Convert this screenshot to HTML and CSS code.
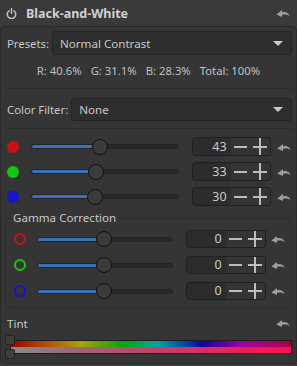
FILE: index.html
```html
<!DOCTYPE html>
<html>
<head>
<meta charset="utf-8">
<link rel="stylesheet" href="styles.css">
</head>
<body>
<svg class="defs" width="0" height="0">
  <symbol id="undo" viewBox="0 0 14 8">
    <path d="M0.3 5.6 L6 1 L6 3.2 C9.5 2.4 12.6 3.6 13.8 7.6 C12 5.6 9.2 5.2 6 6 L6 8 Z"/>
  </symbol>
</svg>
<div class="expander">
  <div class="header">
    <svg class="power" viewBox="0 0 12 12"><path d="M3.4 3 A4.6 4.6 0 1 0 8.6 3" /><path d="M6 0.8 V5.8"/></svg>
    <span class="title">Black-and-White</span>
    <svg class="reset hreset"><use href="#undo"/></svg>
  </div>
  <div class="panel">
    <div class="combo-row presets">
      <span class="label">Presets:</span>
      <div class="combo"><span>Normal Contrast</span><span class="arrow"></span></div>
    </div>
    <div class="stats"><span>R: 40.6%</span><span>G: 31.1%</span><span>B: 28.3%</span><span>Total: 100%</span></div>
    <div class="sep first"></div>
    <div class="combo-row filter">
      <span class="label">Color Filter:</span>
      <div class="combo small"><span>None</span><span class="arrow"></span></div>
    </div>
    <div class="sep second"></div>

    <div class="mixer">
      <div class="srow">
        <span class="dot red"></span>
        <div class="slider main"><div class="track"><div class="fill" style="width:69px"></div></div><div class="knob" style="left:61px"></div></div>
        <div class="spin"><span class="val">43</span><span class="btn minus"><i></i></span><span class="btn plus"><i></i><b></b></span></div>
        <svg class="reset"><use href="#undo"/></svg>
      </div>
      <div class="srow">
        <span class="dot green"></span>
        <div class="slider main"><div class="track"><div class="fill" style="width:65px"></div></div><div class="knob" style="left:57px"></div></div>
        <div class="spin"><span class="val">33</span><span class="btn minus"><i></i></span><span class="btn plus"><i></i><b></b></span></div>
        <svg class="reset"><use href="#undo"/></svg>
      </div>
      <div class="srow">
        <span class="dot blue"></span>
        <div class="slider main"><div class="track"><div class="fill" style="width:64px"></div></div><div class="knob" style="left:56px"></div></div>
        <div class="spin"><span class="val">30</span><span class="btn minus"><i></i></span><span class="btn plus"><i></i><b></b></span></div>
        <svg class="reset"><use href="#undo"/></svg>
      </div>
    </div>

    <fieldset class="gamma">
      <legend>Gamma Correction</legend>
      <div class="grow">
        <span class="ring red"></span>
        <div class="slider gam"><div class="track"><div class="fill" style="width:67px"></div></div><div class="knob" style="left:59px"></div></div>
        <div class="spin g"><span class="val">0</span><span class="btn minus"><i></i></span><span class="btn plus"><i></i><b></b></span></div>
        <svg class="reset"><use href="#undo"/></svg>
      </div>
      <div class="grow">
        <span class="ring green"></span>
        <div class="slider gam"><div class="track"><div class="fill" style="width:67px"></div></div><div class="knob" style="left:59px"></div></div>
        <div class="spin g"><span class="val">0</span><span class="btn minus"><i></i></span><span class="btn plus"><i></i><b></b></span></div>
        <svg class="reset"><use href="#undo"/></svg>
      </div>
      <div class="grow">
        <span class="ring blue"></span>
        <div class="slider gam"><div class="track"><div class="fill" style="width:67px"></div></div><div class="knob" style="left:59px"></div></div>
        <div class="spin g"><span class="val">0</span><span class="btn minus"><i></i></span><span class="btn plus"><i></i><b></b></span></div>
        <svg class="reset"><use href="#undo"/></svg>
      </div>
    </fieldset>

    <div class="tint-head"><span>Tint</span><svg class="reset"><use href="#undo"/></svg></div>
    <div class="tint">
      <div class="bars"><div class="bar-top"></div><div class="bar-bot"></div></div>
      <span class="handle h1"></span>
      <span class="handle h2"></span>
    </div>
  </div>
</div>
</body>
</html>
```
FILE: styles.css
```css
* { box-sizing: border-box; }
html, body { margin: 0; padding: 0; }
body {
  width: 297px;
  height: 366px;
  background: #3a3a3a;
  font-family: "Noto Sans", "Open Sans", sans-serif;
  font-size: 11.3px;
  color: #c6c6c6;
  overflow: hidden;
}
.defs { position: absolute; }
.header {
  height: 26px;
  display: flex;
  align-items: center;
  padding: 0 5px 0 6px;
}
.power {
  width: 11px; height: 11px;
  fill: none;
  stroke: #c4c4c4;
  stroke-width: 1.6;
  stroke-linecap: round;
  margin-top: 1px;
}
.title {
  margin-left: 9px;
  font-weight: bold;
  font-size: 12.5px;
  color: #cdd2d6;
  flex: 1;
}
.reset {
  width: 14px; height: 8px;
  fill: #9c9c9c;
  flex: none;
}
.hreset { margin-right: 2px; }
.panel {
  height: 338px;
  background: #353535;
  border: 1px solid #2a2a2a;
  border-radius: 4px;
  padding: 0 4px 0 4px;
  display: flex;
  flex-direction: column;
}
.combo-row {
  display: flex;
  align-items: center;
  gap: 3px;
}
.combo-row .label { margin-left: 2px; }
.presets { margin-top: 4px; }
.filter { margin-top: 9px; }
.combo {
  flex: 1;
  height: 24px;
  background: #2e2e2e;
  border: 1px solid #242424;
  border-radius: 3px;
  display: flex;
  align-items: center;
  justify-content: space-between;
  padding: 0 8px 0 7px;
  font-size: 11.6px;
}
.combo.small { height: 23px; }
.arrow {
  width: 0; height: 0;
  border-left: 5px solid transparent;
  border-right: 5px solid transparent;
  border-top: 5px solid #c8c8c8;
}
.stats {
  height: 30px;
  display: flex;
  justify-content: center;
  align-items: center;
  gap: 9px;
  color: #bcc0c2;
}
.sep { height: 1px; background: #2c2c2c; }
.first { margin-top: 3px; }
.second { margin-top: 7px; }
.mixer { margin-top: 5px; }
.srow {
  display: flex;
  align-items: center;
  height: 25px;
}
.grow {
  display: flex;
  align-items: center;
  height: 26px;
}
.dot {
  width: 12px; height: 12px;
  border-radius: 50%;
  margin-left: 2px;
  flex: none;
}
.dot.red { background: #cc1111; }
.dot.green { background: #11c711; }
.dot.blue { background: #1414c8; }
.ring {
  width: 12px; height: 12px;
  border-radius: 50%;
  border: 2px solid;
  margin-left: 8px;
  flex: none;
}
.ring.red { border-color: #cc1111; }
.ring.green { border-color: #11c711; }
.ring.blue { border-color: #1414c8; }
.slider {
  position: relative;
  height: 16px;
  display: flex;
  align-items: center;
  flex: none;
}
.slider.main { width: 148px; margin-left: 12px; }
.slider.gam { width: 136px; margin-left: 11px; }
.track {
  width: 100%;
  height: 5px;
  background: #292929;
  border-radius: 3px;
  overflow: hidden;
  border: 1px solid #242424;
}
.fill { height: 100%; background: #3a70b6; }
.knob {
  position: absolute;
  top: 0;
  width: 16px; height: 16px;
  border-radius: 50%;
  background: #3b3b3b;
  border: 1px solid #111;
}
.spin {
  display: flex;
  height: 19px;
  width: 79px;
  margin-left: 13px;
  border: 1px solid #202020;
  border-radius: 3px;
  background: #343434;
  overflow: hidden;
  flex: none;
}
.spin.g { width: 80px; height: 18px; }
.val {
  width: 38px;
  background: #2c2c2c;
  text-align: right;
  padding-right: 4px;
  line-height: 17px;
  color: #c8c8c8;
  font-size: 12.5px;
}
.spin.g .val { width: 39px; line-height: 16px; }
.btn {
  width: 20px;
  position: relative;
  display: flex;
  align-items: center;
  justify-content: center;
}
.btn i {
  display: block;
  width: 13px; height: 2px;
  background: #bdbdbd;
}
.plus i { width: 14px; }
.plus b {
  position: absolute;
  left: 9px;
  top: 0; bottom: 0;
  width: 2px;
  background: #bdbdbd;
}
.srow .reset { margin-left: 6px; }
.grow .reset { margin-left: 5px; }
.gamma {
  margin: 1px 0 0 0;
  padding: 0 0 3px 0;
  border: 1px solid #2d2d2d;
  border-radius: 5px;
  min-width: 0;
}
.gamma legend {
  margin-left: 6px;
  padding: 0 1px;
  line-height: 16px;
  font-size: 11.6px;
  color: #c6c6c6;
}
.tint-head {
  margin-top: 7px;
  height: 16px;
  display: flex;
  align-items: center;
  justify-content: space-between;
  padding: 0 2px 0 2px;
  font-size: 11.6px;
}
.tint {
  position: relative;
  margin-top: 4px;
  height: 24px;
  padding: 5px 0 0 5px;
}
.bars {
  border: 1px solid #1c1c1c;
}
.bar-top {
  height: 6px;
  background: linear-gradient(to right, #a00000 0%, #b04c00 12%, #a8a400 25%, #00a800 40%, #00a6a6 52%, #0040a8 63%, #1000a6 68%, #a000a8 83%, #a8003c 100%);
}
.bar-bot {
  height: 6px;
  background: linear-gradient(to right, #8a8a8a 0%, #9a6a78 20%, #c04468 50%, #ff1050 100%);
}
.handle {
  position: absolute;
  left: 0;
  width: 10px; height: 10px;
  background: #3e3e3e;
  border: 1px solid #232323;
  border-radius: 2px;
}
.h1 { top: 0; }
.h2 { top: 14px; }
```
